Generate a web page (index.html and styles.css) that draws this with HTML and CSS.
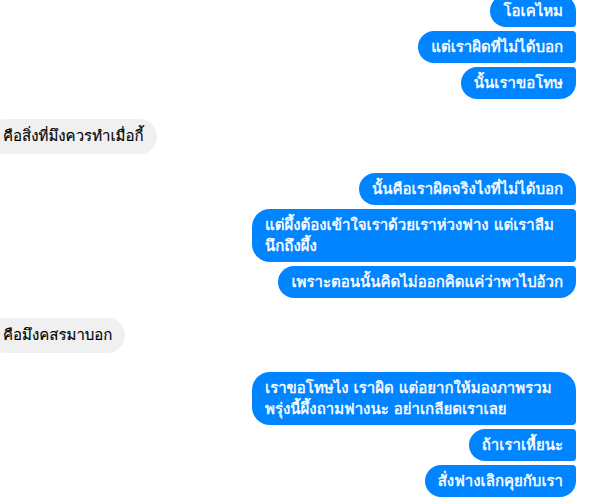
FILE: index.html
```html
<!DOCTYPE html>
<html lang="th">
<head>
<meta charset="utf-8">
<link rel="stylesheet" href="styles.css">
</head>
<body>
<div class="chat">
  <div class="group out">
    <div class="msg">โอเคไหม</div>
    <div class="msg">แต่เราผิดที่ไม่ได้บอก</div>
    <div class="msg">นั้นเราขอโทษ</div>
  </div>
  <div class="group in">
    <div class="msg">คือสิ่งที่มึงควรทำเมื่อกี้</div>
  </div>
  <div class="group out">
    <div class="msg">นั้นคือเราผิดจริงไงที่ไม่ได้บอก</div>
    <div class="msg">แต่ผึ้งต้องเข้าใจเราด้วยเราห่วงฟาง แต่เราลืมนึกถึงผึ้ง</div>
    <div class="msg">เพราะตอนนั้นคิดไม่ออกคิดแค่ว่าพาไปอ้วก</div>
  </div>
  <div class="group in">
    <div class="msg">คือมึงคสรมาบอก</div>
  </div>
  <div class="group out">
    <div class="msg">เราขอโทษไง เราผิด แต่อยากให้มองภาพรวม พรุ่งนี้ผึ้งถามฟางนะ อย่าเกลียดเราเลย</div>
    <div class="msg">ถ้าเราเหี้ยนะ</div>
    <div class="msg">สั่งฟางเลิกคุยกับเรา</div>
  </div>
</div>
</body>
</html>
```

FILE: styles.css
```css
html, body {
  margin: 0;
  padding: 0;
  background: #ffffff;
}
body {
  font-family: "Loma", "Noto Sans Thai Looped", "Noto Sans", sans-serif;
  font-size: 15px;
  line-height: 21px;
  overflow: hidden;
}
.chat {
  display: flex;
  flex-direction: column;
  gap: 19.5px;
  margin-top: -5px;
  padding: 0 27px 0 0;
  margin-left: -12px;
}
.group {
  display: flex;
  flex-direction: column;
  gap: 4px;
}
.group.out {
  align-items: flex-end;
}
.group.in {
  align-items: flex-start;
}
.msg {
  padding: 5.5px 13px;
  border-radius: 18px;
  max-width: 324px;
  box-sizing: border-box;
}
.out .msg {
  background: #0084ff;
  color: #ffffff;
  -webkit-text-stroke: 0.45px #ffffff;
  border-radius: 18px 4px 4px 18px;
}
.out .msg:first-child {
  border-top-right-radius: 18px;
}
.out .msg:last-child {
  border-bottom-right-radius: 18px;
}
.in .msg {
  background: #f0f0f0;
  color: #000000;
  -webkit-text-stroke: 0.15px #000000;
  padding: 7px 13px 7px 15px;
}
```
